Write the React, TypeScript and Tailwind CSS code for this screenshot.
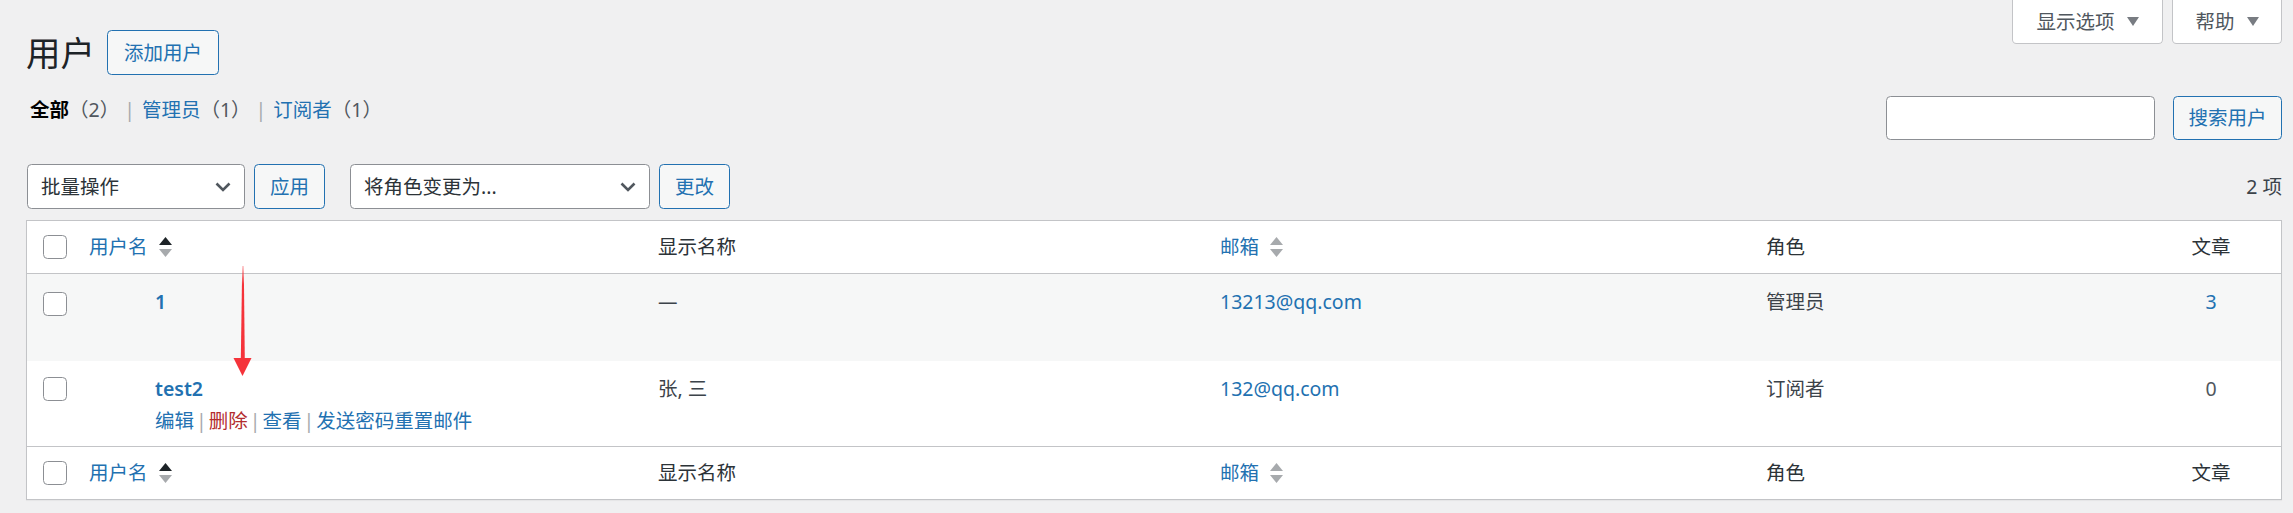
import React from 'react';

function Checkbox() {
  return <span className="block w-6 h-6 rounded-[4.5px] border border-[#8c8f94] bg-white" />;
}

function SortArrows({ active }: { active?: boolean }) {
  return (
    <svg width="13" height="20" viewBox="0 0 13 20" className="ml-[11px] shrink-0">
      <polygon points="6.5,0 13,8 0,8" fill={active ? '#1d2327' : '#a7aaad'} />
      <polygon points="0,12 13,12 6.5,20" fill="#a7aaad" />
    </svg>
  );
}

function Chevron() {
  return (
    <svg width="16" height="10" viewBox="0 0 16 10" className="shrink-0">
      <polyline points="1.5,1.5 8,8 14.5,1.5" fill="none" stroke="#50575e" strokeWidth="2.6" />
    </svg>
  );
}

function Caret() {
  return (
    <svg width="12" height="9" viewBox="0 0 12 9">
      <polygon points="0,0 12,0 6,9" fill="#787c82" />
    </svg>
  );
}

const cols = 'grid grid-cols-[47px_569px_562px_546px_390px_140px]';

function HeadRow({ bottom }: { bottom?: boolean }) {
  return (
    <div className={`${cols} h-[53px] items-center text-[#2c3338] ${bottom ? 'border-t border-[#c3c4c7]' : 'border-b border-[#c3c4c7]'}`}>
      <div className="pl-4"><Checkbox /></div>
      <div className="pl-[15px] flex items-center text-[#2271b1]">用户名<SortArrows active /></div>
      <div className="pl-[15px]">显示名称</div>
      <div className="pl-[15px] flex items-center text-[#2271b1]">邮箱<SortArrows /></div>
      <div className="pl-[15px]">角色</div>
      <div className="text-center">文章</div>
    </div>
  );
}

export default function App() {
  const users = [
    { login: '1', name: '—', email: '13213@qq.com', role: '管理员', posts: '3', alt: true },
    { login: 'test2', name: '张, 三', email: '132@qq.com', role: '订阅者', posts: '0', alt: false, actions: true },
  ];

  return (
    <div className="relative min-h-screen bg-[#f0f0f1] text-[19.5px] text-[#3c434a] font-['Noto_Sans','Noto_Sans_CJK_SC',sans-serif]">
      <div className="pl-[26px] pr-[11px]">
        {/* Title + screen meta */}
        <div className="flex justify-between items-start">
          <div className="pt-[30px] flex items-center">
            <h1 className="text-[34.5px] leading-[45px] text-[#1d2327] font-normal">用户</h1>
            <a className="ml-3 h-[45px] px-4 flex items-center rounded-[4.5px] border border-[#2271b1] bg-[#f6f7f7] text-[#2271b1]">添加用户</a>
          </div>
          <div className="flex gap-[9px]">
            <button className="h-[44px] w-[151px] flex items-center justify-center gap-3 bg-white border border-t-0 border-[#c3c4c7] rounded-b-[4.5px] text-[#50575e]">
              <span>显示选项</span>
              <Caret />
            </button>
            <button className="h-[44px] w-[110px] flex items-center justify-center gap-3 bg-white border border-t-0 border-[#c3c4c7] rounded-b-[4.5px] text-[#50575e]">
              <span>帮助</span>
              <Caret />
            </button>
          </div>
        </div>

        {/* Filters + search */}
        <div className="mt-[21px] flex justify-between items-start">
          <ul className="flex items-center pl-1 h-[28px] leading-[28px] text-[#646970]">
            <li>
              <a className="font-semibold text-black">全部</a>
              <span className="text-[#50575e]">（2）</span>
            </li>
            <li className="ml-[5px]">
              <span className="text-[#a7aaad]">|</span>
              <a className="ml-[7px] text-[#2271b1]">管理员<span className="text-[#50575e]">（1）</span></a>
            </li>
            <li className="ml-[5px]">
              <span className="text-[#a7aaad]">|</span>
              <a className="ml-[7px] text-[#2271b1]">订阅者<span className="text-[#50575e]">（1）</span></a>
            </li>
          </ul>
          <div className="flex items-center">
            <div className="w-[269px] h-[44px] rounded-[4.5px] border border-[#8c8f94] bg-white" />
            <button className="ml-[18px] h-[44px] w-[109px] flex items-center justify-center rounded-[4.5px] border border-[#2271b1] bg-[#f6f7f7] text-[#2271b1]">搜索用户</button>
          </div>
        </div>

        {/* Bulk actions */}
        <div className="mt-[24px] flex items-center justify-between">
          <div className="flex items-center pl-px">
            <div className="w-[218px] h-[45px] px-[13px] flex items-center justify-between rounded-[4.5px] border border-[#8c8f94] bg-white text-[#2c3338]">
              <span>批量操作</span>
              <Chevron />
            </div>
            <button className="ml-[9px] w-[71px] h-[45px] rounded-[4.5px] border border-[#2271b1] bg-[#f6f7f7] text-[#2271b1]">应用</button>
            <div className="ml-[25px] w-[300px] h-[45px] px-[13px] flex items-center justify-between rounded-[4.5px] border border-[#8c8f94] bg-white text-[#2c3338]">
              <span>将角色变更为...</span>
              <Chevron />
            </div>
            <button className="ml-[9px] w-[71px] h-[45px] rounded-[4.5px] border border-[#2271b1] bg-[#f6f7f7] text-[#2271b1]">更改</button>
          </div>
          <span className="text-[#3c434a]">2 项</span>
        </div>

        {/* Users table */}
        <div className="mt-[11px] border border-[#c3c4c7] bg-white shadow-[0_1px_1px_rgba(0,0,0,0.04)]">
          <HeadRow />
          {users.map((u) => (
            <div key={u.login} className={`${cols} ${u.alt ? 'h-[87px] bg-[#f6f7f7]' : 'h-[85px] bg-white'} items-start leading-[29px]`}>
              <div className={`pl-4 ${u.alt ? 'pt-[18px]' : 'pt-[16px]'}`}><Checkbox /></div>
              <div className="pl-[81px] pt-[13px]">
                <div className="font-semibold text-[#2271b1]">{u.login}</div>
                {u.actions && (
                  <div className="mt-[3px] flex items-center text-[#2271b1]">
                    <a>编辑</a>
                    <span className="mx-[2px] text-[#a7aaad]">|</span>
                    <a className="text-[#b32d2e]">删除</a>
                    <span className="mx-[2px] text-[#a7aaad]">|</span>
                    <a>查看</a>
                    <span className="mx-[2px] text-[#a7aaad]">|</span>
                    <a>发送密码重置邮件</a>
                  </div>
                )}
              </div>
              <div className="pl-[15px] pt-[13px] text-[#3c434a]">{u.name}</div>
              <div className="pl-[15px] pt-[13px] text-[#2271b1]">{u.email}</div>
              <div className="pl-[15px] pt-[13px] text-[#3c434a]">{u.role}</div>
              <div className={`pt-[13px] text-center ${u.posts !== '0' ? 'text-[#2271b1]' : 'text-[#50575e]'}`}>{u.posts}</div>
            </div>
          ))}
          <HeadRow bottom />
        </div>
      </div>

      {/* red annotation arrow */}
      <svg className="absolute left-[230px] top-[262px]" width="26" height="116" viewBox="0 0 26 116">
        <defs>
          <linearGradient id="shaft" x1="0" y1="0" x2="0" y2="1">
            <stop offset="0" stopColor="#f5333a" stopOpacity="0.3" />
            <stop offset="0.2" stopColor="#f5333a" />
            <stop offset="1" stopColor="#f5333a" />
          </linearGradient>
        </defs>
        <polygon points="12.2,4 13.8,4 14.8,98 10.8,98" fill="url(#shaft)" />
        <polygon points="3.5,96 21.5,96 12.5,114" fill="#f5333a" />
      </svg>
    </div>
  );
}
